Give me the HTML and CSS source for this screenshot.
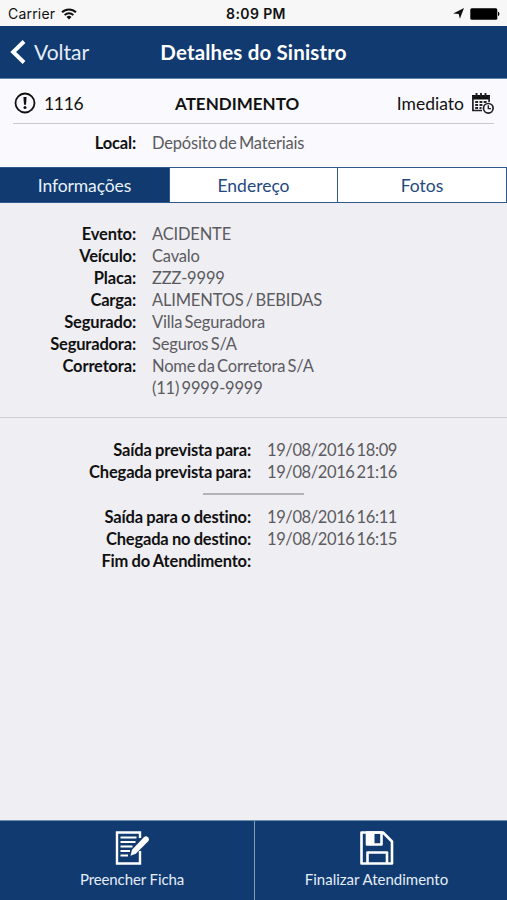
FILE: index.html
```html
<!DOCTYPE html>
<html lang="pt-BR">
<head>
    <meta charset="UTF-8">
    <meta name="viewport" content="width=device-width, initial-scale=1.0">
    <title>Detalhes do Sinistro</title>
    <link rel="stylesheet" href="styles.css">
</head>
<body>
    <div class="app">
        <div class="status-bar">
            <div class="status-left">
                <span class="carrier">Carrier</span>
                <svg class="wifi" width="16" height="12" viewBox="0 0 16 12" fill="none" stroke="#111" stroke-width="1.9">
                    <path d="M1 4.3a10 10 0 0 1 14 0"/>
                    <path d="M3.6 7.1a6.3 6.3 0 0 1 8.8 0"/>
                    <path d="M8 11.4L5.5 8.9a3.6 3.6 0 0 1 5 0z" fill="#111" stroke="none"/>
                </svg>
            </div>
            <span class="clock">8:09 PM</span>
            <div class="status-right">
                <svg width="11" height="11" viewBox="0 0 11 11"><path d="M11 0L6.9 10.8 5.7 6.1.2 5.6z" fill="#111"/></svg>
                <svg width="30" height="12" viewBox="0 0 30 12">
                    <rect x=".3" y=".3" width="27" height="11.4" rx="1.5" fill="#000"/>
                    <path d="M28 3.8a2.4 2.4 0 0 1 0 4.4z" fill="#000"/>
                </svg>
            </div>
        </div>

        <header class="navbar">
            <a class="back" href="#">
                <svg width="16" height="24" viewBox="0 0 16 24" fill="none" stroke="#fff" stroke-width="4"><path d="M14 1.5L3.2 12 14 22.5"/></svg>
                <span>Voltar</span>
            </a>
            <h1>Detalhes do Sinistro</h1>
        </header>

        <section class="summary">
            <div class="summary-top">
                <div class="code">
                    <svg width="22" height="22" viewBox="0 0 22 22" fill="none" stroke="#111">
                        <circle cx="11" cy="11" r="9.5" stroke-width="1.8"/>
                        <path d="M9.4 5h3.2l-.6 7.800h-2z" fill="#111" stroke="none"/>
                        <circle cx="11" cy="15.4" r="1.5" fill="#111" stroke="none"/>
                    </svg>
                    <span>1116</span>
                </div>
                <strong>ATENDIMENTO</strong>
                <div class="priority">
                    <span>Imediato</span>
                    <svg width="22" height="21" viewBox="0 0 22 21" fill="none" stroke="#222">
                        <path d="M0 2h18v4.500H0z" fill="#111" stroke="none"/>
                        <path d="M4.500 0v4M9 0v4M13.500 0v4" stroke-width="1.9"/>
                        <path d="M10 17.500H.9V3M17.100 3v6" stroke-width="1.700"/>
                        <path d="M3.200 9h2.900M7.500 9h2.900M11.700 9h2.900M3.200 12h2.900M7.500 12h2.900M3.200 15h2.900M7.500 15h2" stroke-width="2"/>
                        <circle cx="16.300" cy="15.300" r="4.800" stroke-width="1.700" fill="#f9f9fe"/>
                        <path d="M16.300 12.300v3.300H19" stroke-width="1.400"/>
                    </svg>
                </div>
            </div>
            <dl class="fields">
                <dt>Local:</dt><dd>Depósito de Materiais</dd>
            </dl>
        </section>

        <nav class="tabs">
            <a class="tab active" href="#">Informações</a>
            <a class="tab" href="#">Endereço</a>
            <a class="tab" href="#">Fotos</a>
        </nav>

        <main>
            <dl class="fields info">
                <dt>Evento:</dt><dd>ACIDENTE</dd>
                <dt>Veículo:</dt><dd>Cavalo</dd>
                <dt>Placa:</dt><dd>ZZZ-9999</dd>
                <dt>Carga:</dt><dd>ALIMENTOS / BEBIDAS</dd>
                <dt>Segurado:</dt><dd>Villa Seguradora</dd>
                <dt>Seguradora:</dt><dd>Seguros S/A</dd>
                <dt>Corretora:</dt><dd>Nome da Corretora S/A<br>(11) 9999-9999</dd>
            </dl>
            <div class="times">
                <dl class="fields wide">
                    <dt>Saída prevista para:</dt><dd>19/08/2016 18:09</dd>
                    <dt>Chegada prevista para:</dt><dd>19/08/2016 21:16</dd>
                </dl>
                <hr>
                <dl class="fields wide">
                    <dt>Saída para o destino:</dt><dd>19/08/2016 16:11</dd>
                    <dt>Chegada no destino:</dt><dd>19/08/2016 16:15</dd>
                    <dt>Fim do Atendimento:</dt><dd></dd>
                </dl>
            </div>
        </main>

        <footer class="actions">
            <a class="action" href="#">
                <svg width="34" height="34" viewBox="0 0 34 34" fill="none" stroke="#fff">
                    <path d="M25 7V1.5H2v31h23V20" stroke-width="2.4"/>
                    <path d="M5.500 6.500h16M5.500 11h15M5.500 15.500h12M5.500 20h9.500M5.500 24.500h7.500" stroke-width="1.800"/>
                    <path d="M28.900 6.300a2.900 2.900 0 0 1 4.100 4.100L20.800 22.800l-5.300 2 1.500-6z" fill="#fff" stroke="none"/>
                </svg>
                <span>Preencher Ficha</span>
            </a>
            <a class="action" href="#">
                <svg width="34" height="34" viewBox="0 0 34 34" fill="none" stroke="#fff" stroke-width="2.6" stroke-linejoin="round">
                    <path d="M1.500 1.500H23l9 9v22H1.500z"/>
                    <path d="M7 1.500h14.500v12H7z"/>
                    <path d="M7 1.500h7.500v12H7z" fill="#fff" stroke="none"/>
                    <path d="M7.500 32V21.500H27V32"/>
                </svg>
                <span>Finalizar Atendimento</span>
            </a>
        </footer>
    </div>
</body>
</html>
```
FILE: styles.css
```css
:root {
    --blue: #113a70;
    --background: #efeef3;
    --panel: #f9f9fe;
}

* {
    margin: 0;
    padding: 0;
    box-sizing: border-box;
}

body {
    font-family: Lato, sans-serif;
    font-size: 16.5px;
    font-variant-ligatures: none;
    color: #111;
    background: var(--background);
}

a {
    color: inherit;
    text-decoration: none;
}

svg {
    display: block;
    flex: none;
}

.app {
    display: flex;
    flex-direction: column;
    height: 900px;
}

.status-bar {
    display: grid;
    grid-template-columns: 1fr auto 1fr;
    align-items: center;
    height: 26px;
    padding: 1px 7px 0 8px;
    background: #f7f7f7;
    font-family: Inter, sans-serif;
    font-size: 14px;
}

.carrier {
    letter-spacing: 0.2px;
}

.status-left,
.status-right {
    display: flex;
    align-items: center;
    gap: 6px;
}

.status-right {
    justify-content: flex-end;
}

.clock {
    padding-left: 4px;
    font-weight: 600;
    letter-spacing: 0.4px;
}

.navbar {
    display: grid;
    grid-template-columns: 1fr auto 1fr;
    align-items: center;
    height: 53px;
    padding: 0 10px;
    background: var(--blue);
    border-bottom: 1px solid #5f82ae;
    color: #fff;
}

.navbar h1 {
    font-size: 20.5px;
    font-weight: 700;
    letter-spacing: 0.15px;
}

.back {
    display: flex;
    align-items: center;
    gap: 8px;
    font-size: 21px;
    line-height: 24px;
    color: #e4edf8;
}

.summary {
    height: 88px;
    padding: 0 13px;
    background: var(--panel);
}

.summary-top {
    display: flex;
    align-items: center;
    justify-content: space-between;
    height: 45px;
    padding: 4px 0 0 1px;
    border-bottom: 1px solid #c9c9ce;
    font-size: 17.5px;
}

.summary-top strong {
    padding-right: 6px;
    font-size: 17px;
}

.code,
.priority {
    display: flex;
    align-items: center;
    gap: 8px;
}

.code {
    letter-spacing: -0.3px;
}

.fields {
    display: grid;
    grid-template-columns: 136px 1fr;
    column-gap: 16px;
    line-height: 22px;
}

.fields dt {
    font-weight: 700;
    text-align: right;
    letter-spacing: -0.18px;
    word-spacing: -0.5px;
}

.fields dd {
    color: #5b5b60;
    letter-spacing: -0.18px;
    word-spacing: -1.7px;
}

.summary .fields {
    margin: 8px -13px 0;
}

.tabs {
    display: grid;
    grid-template-columns: 170px 168px 168px;
    height: 36px;
    border: 1px solid #31588c;
    border-left: 0;
    background: #fff;
    color: #24497f;
    font-size: 17.5px;
}

.tab {
    display: flex;
    align-items: center;
    justify-content: center;
    border-right: 1px solid #31588c;
}

.tab.active {
    background: var(--blue);
    color: #e8f1fa;
    letter-spacing: -0.1px;
}

.tab:last-child {
    border-right: 0;
}

main {
    flex: 1;
}

.info {
    padding: 20px 0 18px;
    border-bottom: 1px solid #cfced3;
}

.times {
    padding-top: 21px;
}

.fields.wide {
    grid-template-columns: 251px 1fr;
}

.wide dd {
    letter-spacing: -0.4px;
}

.times hr {
    width: 101px;
    height: 2px;
    margin: 10px auto 11px;
    border: 0;
    background: #b4b4b8;
}

.actions {
    display: grid;
    grid-template-columns: 255px 252px;
    height: 80px;
    border-top: 1px solid #6d8fae;
    background: var(--blue);
    color: #e4edf8;
    font-size: 15px;
}

.action {
    display: flex;
    flex-direction: column;
    align-items: center;
    gap: 5px;
    padding: 10px 9px 0 0;
}

.action:first-child {
    padding: 10px 0 0 10px;
    border-right: 1px solid #7f9fb9;
    letter-spacing: -0.1px;
}
```
